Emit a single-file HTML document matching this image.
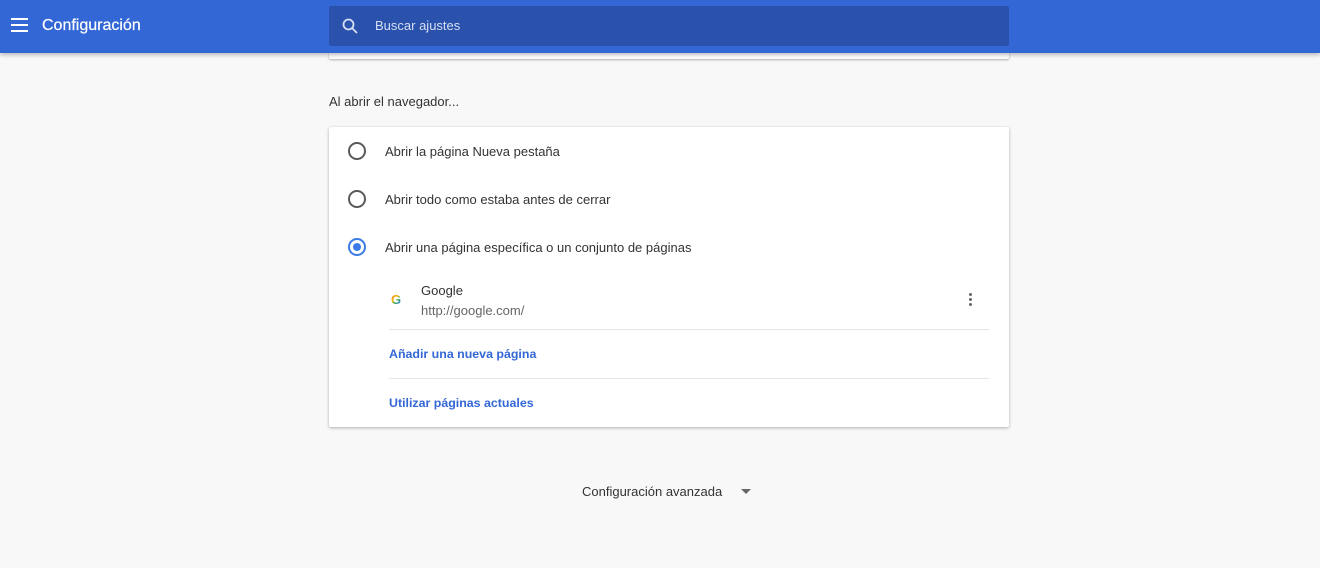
<!DOCTYPE html>
<html><head><meta charset="utf-8"><style>
body{margin:0;width:1320px;height:568px;background:#f8f8f8;font-family:"Liberation Sans",sans-serif;overflow:hidden;position:relative}
.top{position:absolute;left:0;top:0;width:1320px;height:53px;background:#3367d6;box-shadow:0 2px 4px rgba(0,0,0,.25);z-index:2}
.title{position:absolute;left:42px;top:17px;color:#fff;font-size:16px;font-weight:500;-webkit-text-stroke:0.2px #fff}
.search{position:absolute;left:329px;top:6px;width:680px;height:40px;background:#2a51ab;border-radius:2px}
.search span{position:absolute;left:46px;top:12px;color:#d6dff3;font-size:13px}
.prevcard{position:absolute;left:329px;top:40px;width:680px;height:19px;background:#fff;box-shadow:0 1px 2px rgba(0,0,0,.3);border-radius:2px}
.h{position:absolute;left:329px;top:94px;font-size:13px;color:#333}
.card{position:absolute;left:329px;top:127px;width:680px;height:300px;background:#fff;box-shadow:0 1px 3px rgba(0,0,0,.3);border-radius:2px}
.r{position:absolute;left:19px;width:18px;height:18px;border:2px solid #5a5a5a;border-radius:50%;box-sizing:border-box}
.t{position:absolute;left:56px;font-size:13px;color:#333}
.link{position:absolute;left:60px;font-size:12.4px;color:#3367d6;font-weight:bold}
.line{position:absolute;left:60px;right:20px;height:1px;background:#e6e6e6}
</style></head><body>
<div class="top">
<svg style="position:absolute;left:11px;top:18px" width="18" height="14"><rect y="0" width="17" height="2" fill="#fff"/><rect y="6" width="17" height="2" fill="#fff"/><rect y="12" width="17" height="2" fill="#fff"/></svg>
<div class="title">Configuración</div>
<div class="search"><svg style="position:absolute;left:13px;top:12px" width="16" height="16"><circle cx="6.5" cy="6.5" r="5" stroke="#d6dff3" stroke-width="1.8" fill="none"/><line x1="10" y1="10" x2="15" y2="15" stroke="#d6dff3" stroke-width="1.8"/></svg><span>Buscar ajustes</span></div>
</div>
<div class="prevcard"></div>
<div class="h">Al abrir el navegador...</div>
<div class="card">
<div class="r" style="top:15px"></div><div class="t" style="top:17px">Abrir la página Nueva pestaña</div>
<div class="r" style="top:63px"></div><div class="t" style="top:65px">Abrir todo como estaba antes de cerrar</div>
<div class="r" style="top:111px;border-color:#3b7be8"><div style="position:absolute;left:3px;top:3px;width:8px;height:8px;border-radius:50%;background:#3b7be8"></div></div><div class="t" style="top:113px">Abrir una página específica o un conjunto de páginas</div>
<div style="position:absolute;left:62px;top:165px;font-size:13px;font-weight:bold;background:linear-gradient(135deg,#ea4335 0%,#fbbc05 40%,#34a853 60%,#4285f4 80%);-webkit-background-clip:text;color:transparent">G</div>
<div class="t" style="left:92px;top:156px">Google</div>
<div class="t" style="left:92px;top:176px;color:#666">http://google.com/</div>
<div style="position:absolute;left:640px;top:166px;width:3px"><div style="width:3px;height:3px;background:#666;border-radius:50%;margin-bottom:2px"></div><div style="width:3px;height:3px;background:#666;border-radius:50%;margin-bottom:2px"></div><div style="width:3px;height:3px;background:#666;border-radius:50%"></div></div>
<div class="line" style="top:202px"></div>
<div class="link" style="top:220px">Añadir una nueva página</div>
<div class="line" style="top:251px"></div>
<div class="link" style="top:269px">Utilizar páginas actuales</div>
</div>
<div style="position:absolute;left:582px;top:484px;font-size:13px;color:#333">Configuración avanzada</div>
<svg style="position:absolute;left:741px;top:489px" width="10" height="5"><path d="M0 0L10 0L5 5Z" fill="#666"/></svg>
</body></html>
